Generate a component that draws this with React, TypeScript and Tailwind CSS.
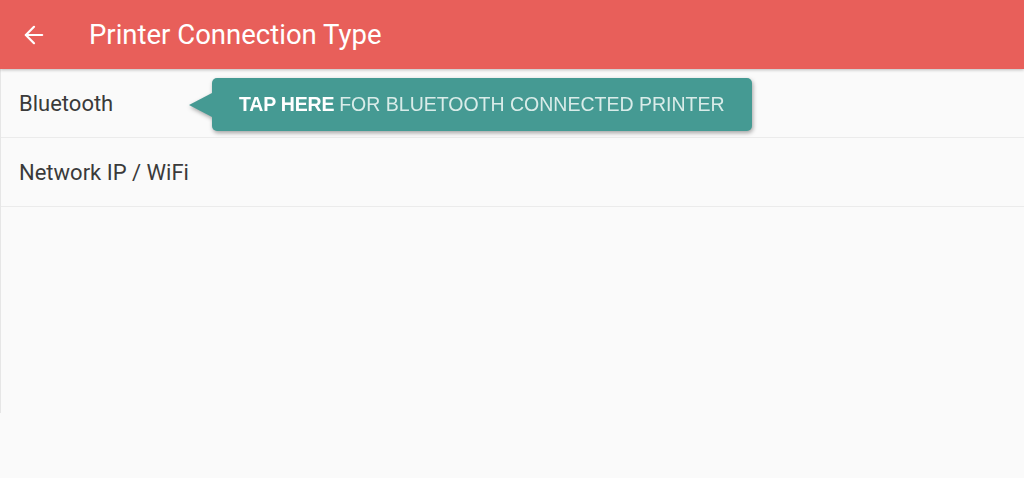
import { ArrowLeft } from "lucide-react";

export default function App() {
  return (
    <div className="w-[1024px] h-[478px] bg-[#fafafa] overflow-hidden relative" style={{ fontFamily: "Roboto, 'Noto Sans', sans-serif" }}>
      {/* App bar */}
      <div className="h-[69px] bg-[#e85f5a] flex items-center shadow-[0_1px_3px_rgba(0,0,0,0.25)] relative z-10">
        <ArrowLeft className="w-[28px] h-[28px] text-white ml-[20px]" strokeWidth={1.9} />
        <h1 className="ml-[41px] text-white text-[27.5px] font-normal">Printer Connection Type</h1>
      </div>

      <div className="h-[344px] border-l border-[#e6e6e6]">
        {/* Bluetooth row */}
        <div className="h-[69px] border-b border-[#ebebeb] flex items-center relative">
          <span className="ml-[18px] text-[22px] text-[#3a3a3a] pt-[1px]">Bluetooth</span>

          {/* Tooltip callout */}
          <div className="absolute left-[188px] top-[9px] flex items-center drop-shadow-[1px_2px_2px_rgba(0,0,0,0.35)]">
            <div className="w-0 h-0 border-y-[12px] border-y-transparent border-r-[23px] border-r-[#459a93]" />
            <div className="w-[540px] h-[53px] bg-[#459a93] rounded-[5px] flex items-center pl-[27px] text-[19.5px] text-white" style={{ fontFamily: "'Liberation Sans', Arial, sans-serif" }}>
              <span className="font-bold tracking-[-0.2px]">TAP HERE</span>
              <span className="ml-[5px] text-[#d9ece9] font-light">FOR BLUETOOTH CONNECTED PRINTER</span>
            </div>
          </div>
        </div>

        {/* Network row */}
        <div className="h-[69px] border-b border-[#ebebeb] flex items-center">
          <span className="ml-[18px] text-[22px] text-[#3a3a3a] pt-[1px]">Network IP / WiFi</span>
        </div>
      </div>
    </div>
  );
}
